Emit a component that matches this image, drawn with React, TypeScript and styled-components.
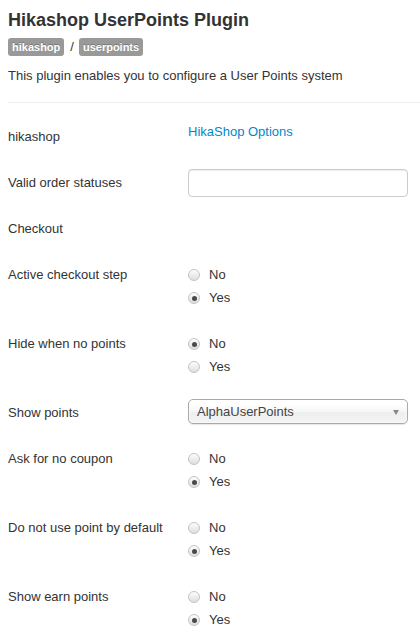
import React from "react";
import styled, { createGlobalStyle } from "styled-components";

const Global = createGlobalStyle`
  html, body { margin: 0; padding: 0; background: #fff; }
  body {
    font-family: "Liberation Sans", Arial, Helvetica, sans-serif;
    font-size: 13px;
    line-height: 18px;
    color: #333;
  }
`;

const Page = styled.div`
  padding-left: 8px;
`;

const Title = styled.h2`
  margin: 10px 0 0;
  font-size: 18px;
  line-height: 20px;
  font-weight: bold;
  color: #333;
`;

const Tags = styled.div`
  display: flex;
  align-items: center;
  margin-top: 8px;
  height: 18px;
`;

const Badge = styled.span`
  display: inline-block;
  background: #999;
  color: #fff;
  font-size: 11px;
  font-weight: bold;
  line-height: 14px;
  padding: 2px 4px;
  border-radius: 3px;
  text-shadow: 0 -1px 0 rgba(0, 0, 0, 0.25);
`;

const Slash = styled.span`
  margin: 0 5px 0 6px;
  color: #333;
`;

const Desc = styled.p`
  margin: 11px 0 0;
`;

const Divider = styled.hr`
  margin: 17px 0 20px;
  border: 0;
  border-top: 1px solid #eee;
  height: 0;
`;

const Group = styled.div`
  display: flex;
  min-height: 28px;
  margin-bottom: 18px;
`;

const Label = styled.div`
  flex: none;
  width: 180px;
  padding-top: 5px;
  line-height: 18px;
`;

const Controls = styled.div`
  flex: 1;
`;

const Link = styled.a`
  color: #0088cc;
  text-decoration: none;
  line-height: 18px;
`;

const TextInput = styled.input`
  box-sizing: border-box;
  width: 220px;
  height: 28px;
  padding: 4px 6px;
  border: 1px solid #ccc;
  border-radius: 4px;
  background: #fff;
  box-shadow: inset 0 1px 1px rgba(0, 0, 0, 0.075);
  font: inherit;
  margin: 0;
`;

const RadioList = styled.div`
  display: flex;
  flex-direction: column;
  gap: 5px;
  padding: 5px 0;
`;

const RadioRow = styled.label`
  display: flex;
  align-items: center;
  height: 18px;
  line-height: 18px;
`;

const Dot = styled.span<{ $checked: boolean }>`
  box-sizing: border-box;
  width: 12px;
  height: 12px;
  margin-right: 9px;
  border-radius: 50%;
  border: 1px solid #c4c4c4;
  background: linear-gradient(#fdfdfd, #dedede);
  display: flex;
  align-items: center;
  justify-content: center;
  &::after {
    content: "";
    display: ${(p) => (p.$checked ? "block" : "none")};
    width: 5px;
    height: 5px;
    border-radius: 50%;
    background: #4a4a4a;
  }
`;

const Select = styled.div`
  box-sizing: border-box;
  position: relative;
  width: 220px;
  height: 25px;
  padding-left: 8px;
  border: 1px solid #aaa;
  border-radius: 5px;
  line-height: 23px;
  color: #444;
  background: linear-gradient(#fff 20%, #f6f6f6 50%, #eee 52%, #f4f4f4 100%);
  box-shadow: inset 0 0 3px #fff, 0 1px 1px rgba(0, 0, 0, 0.1);
`;

const Arrow = styled.span`
  position: absolute;
  right: 8px;
  top: 10px;
  width: 0;
  height: 0;
  border-left: 3px solid transparent;
  border-right: 3px solid transparent;
  border-top: 5px solid #888;
`;

type RadioProps = { value: "No" | "Yes" };

function YesNo({ value }: RadioProps) {
  return (
    <RadioList>
      {(["No", "Yes"] as const).map((opt) => (
        <RadioRow key={opt}>
          <Dot $checked={opt === value} />
          {opt}
        </RadioRow>
      ))}
    </RadioList>
  );
}

const radios: { label: string; value: "No" | "Yes" }[] = [
  { label: "Active checkout step", value: "Yes" },
  { label: "Hide when no points", value: "No" },
];

const radios2: { label: string; value: "No" | "Yes" }[] = [
  { label: "Ask for no coupon", value: "Yes" },
  { label: "Do not use point by default", value: "Yes" },
  { label: "Show earn points", value: "Yes" },
];

export default function App() {
  return (
    <Page>
      <Global />
      <Title>Hikashop UserPoints Plugin</Title>
      <Tags>
        <Badge>hikashop</Badge>
        <Slash>/</Slash>
        <Badge>userpoints</Badge>
      </Tags>
      <Desc>This plugin enables you to configure a User Points system</Desc>
      <Divider />
      <Group>
        <Label>hikashop</Label>
        <Controls>
          <Link href="#">HikaShop Options</Link>
        </Controls>
      </Group>
      <Group>
        <Label>Valid order statuses</Label>
        <Controls>
          <TextInput type="text" defaultValue="" />
        </Controls>
      </Group>
      <Group>
        <Label>Checkout</Label>
        <Controls />
      </Group>
      {radios.map((r) => (
        <Group key={r.label}>
          <Label>{r.label}</Label>
          <Controls>
            <YesNo value={r.value} />
          </Controls>
        </Group>
      ))}
      <Group>
        <Label>Show points</Label>
        <Controls>
          <Select>
            AlphaUserPoints
            <Arrow />
          </Select>
        </Controls>
      </Group>
      {radios2.map((r) => (
        <Group key={r.label}>
          <Label>{r.label}</Label>
          <Controls>
            <YesNo value={r.value} />
          </Controls>
        </Group>
      ))}
    </Page>
  );
}
